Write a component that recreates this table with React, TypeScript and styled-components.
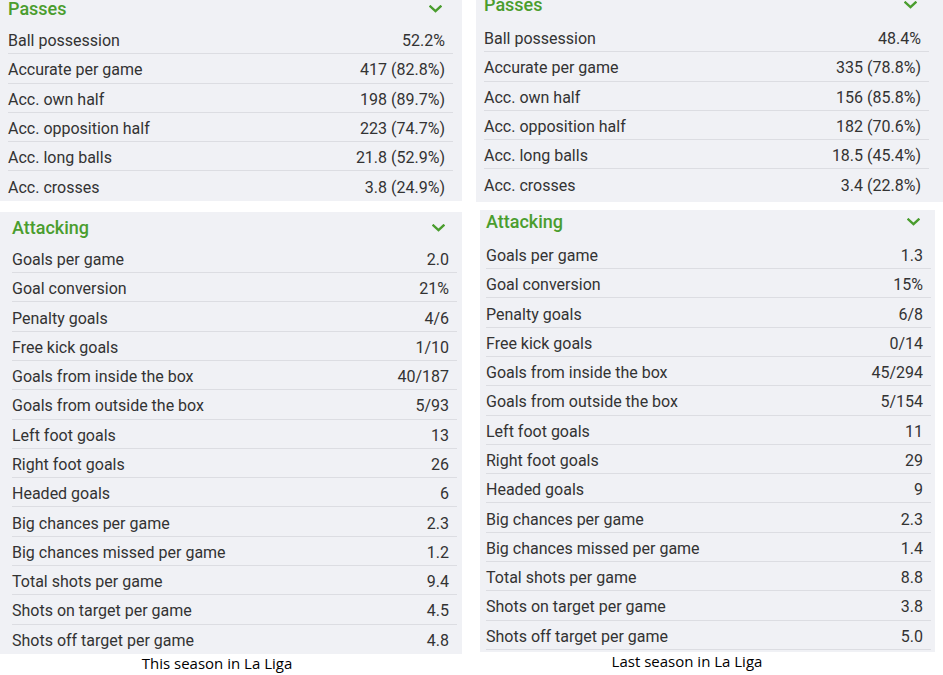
import { createGlobalStyle, styled } from "styled-components";

const GlobalStyle = createGlobalStyle`
  html, body {
    margin: 0;
    padding: 0;
    background: #ffffff;
  }
  body {
    font-family: Roboto, "Liberation Sans", sans-serif;
  }
`;

type Stat = [string, string];

const passesThis: Stat[] = [
  ["Ball possession", "52.2%"],
  ["Accurate per game", "417 (82.8%)"],
  ["Acc. own half", "198 (89.7%)"],
  ["Acc. opposition half", "223 (74.7%)"],
  ["Acc. long balls", "21.8 (52.9%)"],
  ["Acc. crosses", "3.8 (24.9%)"],
];

const passesLast: Stat[] = [
  ["Ball possession", "48.4%"],
  ["Accurate per game", "335 (78.8%)"],
  ["Acc. own half", "156 (85.8%)"],
  ["Acc. opposition half", "182 (70.6%)"],
  ["Acc. long balls", "18.5 (45.4%)"],
  ["Acc. crosses", "3.4 (22.8%)"],
];

const attackingThis: Stat[] = [
  ["Goals per game", "2.0"],
  ["Goal conversion", "21%"],
  ["Penalty goals", "4/6"],
  ["Free kick goals", "1/10"],
  ["Goals from inside the box", "40/187"],
  ["Goals from outside the box", "5/93"],
  ["Left foot goals", "13"],
  ["Right foot goals", "26"],
  ["Headed goals", "6"],
  ["Big chances per game", "2.3"],
  ["Big chances missed per game", "1.2"],
  ["Total shots per game", "9.4"],
  ["Shots on target per game", "4.5"],
  ["Shots off target per game", "4.8"],
];

const attackingLast: Stat[] = [
  ["Goals per game", "1.3"],
  ["Goal conversion", "15%"],
  ["Penalty goals", "6/8"],
  ["Free kick goals", "0/14"],
  ["Goals from inside the box", "45/294"],
  ["Goals from outside the box", "5/154"],
  ["Left foot goals", "11"],
  ["Right foot goals", "29"],
  ["Headed goals", "9"],
  ["Big chances per game", "2.3"],
  ["Big chances missed per game", "1.4"],
  ["Total shots per game", "8.8"],
  ["Shots on target per game", "3.8"],
  ["Shots off target per game", "5.0"],
];

const Page = styled.div`
  display: grid;
  grid-template-columns: 462px 467px;
  column-gap: 14px;
  width: 943px;
  height: 675px;
  overflow: hidden;
`;

const Column = styled.div`
  display: flex;
  flex-direction: column;
`;

const Panel = styled.section<{ $pl: number; $pr: number; $pb: number; $mt: number; $mx: [number, number] }>`
  background: #f0f1f5;
  margin: ${(p) => p.$mt}px ${(p) => p.$mx[1]}px 0 ${(p) => p.$mx[0]}px;
  padding: 0 ${(p) => p.$pr}px ${(p) => p.$pb}px ${(p) => p.$pl}px;
`;

const Header = styled.div<{ $h: number; $below: number; $chevronGap: number }>`
  display: flex;
  align-items: center;
  justify-content: space-between;
  height: ${(p) => p.$h}px;
  padding-bottom: ${(p) => p.$below}px;
  padding-right: ${(p) => p.$chevronGap}px;
  box-sizing: border-box;
`;

const Title = styled.h3`
  margin: 0;
  font-family: Roboto, "Liberation Sans", sans-serif;
  font-size: 18px;
  font-weight: 500;
  line-height: 20px;
  color: #4a9d2e;
`;

const Row = styled.div<{ $lastLine: boolean }>`
  display: flex;
  align-items: center;
  justify-content: space-between;
  height: 29.3px;
  box-sizing: border-box;
  padding: 3px 8px 0 0;
  border-bottom: 1px solid #dcdde2;
  font-size: 16px;
  color: #333333;

  &:last-child {
    border-bottom-color: ${(p) => (p.$lastLine ? "#dcdde2" : "transparent")};
  }
`;

const Value = styled.span`
  text-align: right;
`;

const Caption = styled.div<{ $pr: number }>`
  font-family: "Open Sans", "Noto Sans", sans-serif;
  font-size: 15px;
  line-height: 18px;
  color: #000000;
  text-align: center;
  padding-right: ${(p) => p.$pr}px;
`;

function Chevron() {
  return (
    <svg width="13" height="8" viewBox="0 0 13 8">
      <path
        d="M1.5 1.5 L6.5 6.2 L11.5 1.5"
        fill="none"
        stroke="#4a9d2e"
        strokeWidth="2.4"
        strokeLinecap="square"
      />
    </svg>
  );
}

type BoxProps = {
  title: string;
  stats: Stat[];
  pl: number;
  pr: number;
  pb: number;
  mt?: number;
  mx?: [number, number];
  headH: number;
  headBelow: number;
  chevronGap: number;
  lastLine?: boolean;
};

function StatBox({
  title,
  stats,
  pl,
  pr,
  pb,
  mt = 0,
  mx = [0, 0],
  headH,
  headBelow,
  chevronGap,
  lastLine = false,
}: BoxProps) {
  return (
    <Panel $pl={pl} $pr={pr} $pb={pb} $mt={mt} $mx={mx}>
      <Header $h={headH} $below={headBelow} $chevronGap={chevronGap}>
        <Title>{title}</Title>
        <Chevron />
      </Header>
      {stats.map(([label, value]) => (
        <Row key={label} $lastLine={lastLine}>
          <span>{label}</span>
          <Value>{value}</Value>
        </Row>
      ))}
    </Panel>
  );
}

export default function App() {
  return (
    <>
      <GlobalStyle />
      <Page>
        <Column>
          <StatBox title="Passes" stats={passesThis} pl={8} pr={9} pb={0} headH={25} headBelow={7} chevronGap={11} />
          <StatBox
            title="Attacking"
            stats={attackingThis}
            pl={12}
            pr={5}
            pb={0}
            mt={11}
            headH={32}
            headBelow={0}
            chevronGap={12}
          />
          <Caption $pr={28}>This season in La Liga</Caption>
        </Column>
        <Column>
          <StatBox title="Passes" stats={passesLast} pl={8} pr={14} pb={3} headH={23} headBelow={13} chevronGap={12} />
          <StatBox
            title="Attacking"
            stats={attackingLast}
            pl={6}
            pr={4}
            pb={2}
            mt={8}
            mx={[4, 8]}
            headH={30}
            headBelow={6}
            chevronGap={11}
            lastLine
          />
          <Caption $pr={45}>Last season in La Liga</Caption>
        </Column>
      </Page>
    </>
  );
}
